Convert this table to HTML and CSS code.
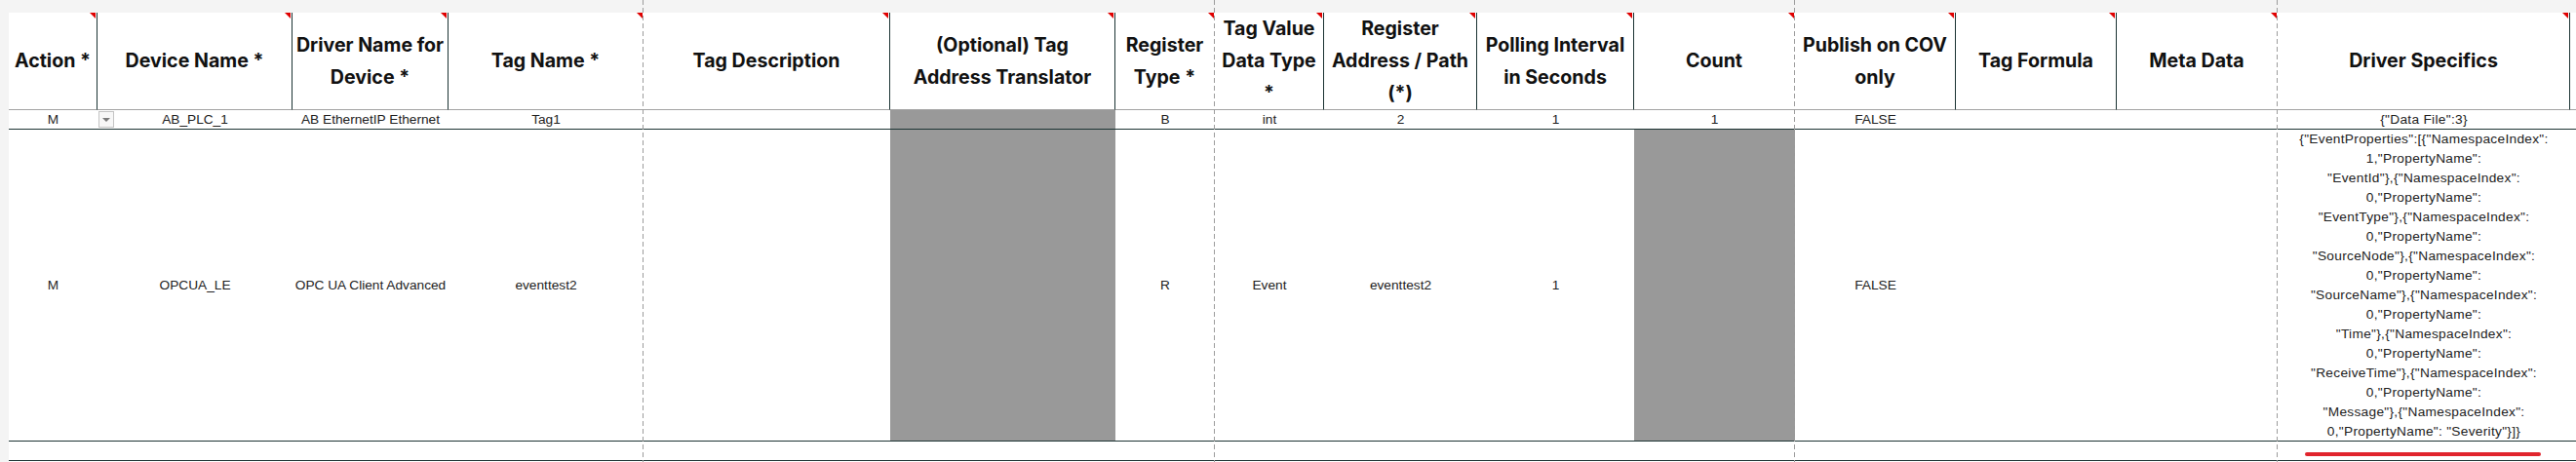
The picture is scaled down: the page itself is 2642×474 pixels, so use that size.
FILE: index.html
```html
<!DOCTYPE html>
<html lang="en">
<head>
<meta charset="utf-8">
<title>Tag Import Sheet</title>
<link rel="stylesheet" href="styles.css">
</head>
<body>
<div class="sheet">
  <div class="grid">
    <div class="hd">Action *</div>
    <div class="hd">Device Name *</div>
    <div class="hd">Driver Name for<br>Device *</div>
    <div class="hd nb">Tag Name *</div>
    <div class="hd">Tag Description</div>
    <div class="hd">(Optional) Tag<br>Address Translator</div>
    <div class="hd nb">Register<br>Type *</div>
    <div class="hd">Tag Value<br>Data Type<br>*</div>
    <div class="hd">Register<br>Address / Path<br>(*)</div>
    <div class="hd">Polling Interval<br>in Seconds</div>
    <div class="hd nb">Count</div>
    <div class="hd">Publish on COV<br>only</div>
    <div class="hd">Tag Formula</div>
    <div class="hd nb">Meta Data</div>
    <div class="hd">Driver Specifics</div>
    <div class="hd blank"></div>

    <div class="cell">M</div>
    <div class="cell">AB_PLC_1</div>
    <div class="cell">AB EthernetIP Ethernet</div>
    <div class="cell">Tag1</div>
    <div class="cell"></div>
    <div class="cell shade"></div>
    <div class="cell">B</div>
    <div class="cell">int</div>
    <div class="cell">2</div>
    <div class="cell">1</div>
    <div class="cell">1</div>
    <div class="cell">FALSE</div>
    <div class="cell"></div>
    <div class="cell"></div>
    <div class="cell json">{"Data File":3}</div>
    <div class="cell"></div>

    <div class="cell">M</div>
    <div class="cell">OPCUA_LE</div>
    <div class="cell">OPC UA Client Advanced</div>
    <div class="cell">eventtest2</div>
    <div class="cell"></div>
    <div class="cell shade"></div>
    <div class="cell">R</div>
    <div class="cell">Event</div>
    <div class="cell">eventtest2</div>
    <div class="cell">1</div>
    <div class="cell shade"></div>
    <div class="cell">FALSE</div>
    <div class="cell"></div>
    <div class="cell"></div>
    <div class="cell json">{"EventProperties":[{"NamespaceIndex":<br>1,"PropertyName":<br>"EventId"},{"NamespaceIndex":<br>0,"PropertyName":<br>"EventType"},{"NamespaceIndex":<br>0,"PropertyName":<br>"SourceNode"},{"NamespaceIndex":<br>0,"PropertyName":<br>"SourceName"},{"NamespaceIndex":<br>0,"PropertyName":<br>"Time"},{"NamespaceIndex":<br>0,"PropertyName":<br>"ReceiveTime"},{"NamespaceIndex":<br>0,"PropertyName":<br>"Message"},{"NamespaceIndex":<br>0,"PropertyName": "Severity"}]}</div>
    <div class="cell"></div>

    <div class="cell"></div><div class="cell"></div><div class="cell"></div><div class="cell"></div>
    <div class="cell"></div><div class="cell"></div><div class="cell"></div><div class="cell"></div>
    <div class="cell"></div><div class="cell"></div><div class="cell"></div><div class="cell"></div>
    <div class="cell"></div><div class="cell"></div><div class="cell"></div><div class="cell"></div>
  </div>

  <div class="pagebreak pb1"></div>
  <div class="pagebreak pb2"></div>
  <div class="pagebreak pb3"></div>
  <div class="pagebreak pb4"></div>

  <div class="dropdown"><span class="caret"></span></div>
  <div class="annotation"></div>
</div>
</body>
</html>
```
FILE: styles.css
```css
* { box-sizing: border-box; }

html, body {
  margin: 0;
  padding: 0;
  background: #f4f4f4;
}

.sheet {
  position: relative;
  width: 2642px;
  height: 474px;
  overflow: hidden;
  padding: 13px 0 0 9px;
}

.grid {
  display: grid;
  grid-template-columns: 91px 200px 160px 200px 253px 231px 102px 112px 157px 161px 165px 165px 165px 165px 300px 1fr;
  grid-template-rows: 100px 20px 320px 20px;
  background: #ffffff;
  height: 461px;
}

.hd {
  position: relative;
  display: flex;
  align-items: center;
  justify-content: center;
  text-align: center;
  font-family: "Inter", "DejaVu Sans", sans-serif;
  font-weight: 700;
  font-size: 19.6px;
  line-height: 32.7px;
  color: #111111;
  border-right: 1px solid #1b3333;
  border-bottom: 1px solid #a3a3a3;
  white-space: nowrap;
}

.hd::after {
  content: "";
  position: absolute;
  top: 0;
  right: 1px;
  width: 0;
  height: 0;
  border-top: 6px solid #e00000;
  border-left: 6px solid transparent;
}

.hd.nb { border-right-color: transparent; }
.hd.nb::after { right: 0; }

.hd.blank { border-right: none; }
.hd.blank::after { display: none; }

.cell {
  display: flex;
  align-items: center;
  justify-content: center;
  text-align: center;
  font-family: "Liberation Sans", Arial, sans-serif;
  font-size: 13.7px;
  line-height: 20px;
  color: #222222;
  border-bottom: 1px solid #1d3434;
  white-space: nowrap;
  overflow: visible;
}

.cell.shade { background: #999999; }

.cell.json {
  line-height: 20px;
  letter-spacing: 0.3px;
}

.pagebreak {
  position: absolute;
  top: 0;
  width: 1px;
  height: 474px;
  background: repeating-linear-gradient(to bottom, #9c9c9c 0 5px, transparent 5px 8px);
}
.pb1 { left: 659px; }
.pb2 { left: 1245px; }
.pb3 { left: 1840px; }
.pb4 { left: 2335px; }

.dropdown {
  position: absolute;
  left: 101px;
  top: 114px;
  width: 16px;
  height: 17px;
  border: 1px solid #c4c4c4;
  background: #f7f7f7;
  display: flex;
  align-items: center;
  justify-content: center;
}

.caret {
  width: 0;
  height: 0;
  border-left: 4px solid transparent;
  border-right: 4px solid transparent;
  border-top: 4px solid #7a7a7a;
}

.annotation {
  position: absolute;
  left: 2364px;
  top: 464px;
  width: 242px;
  height: 3.5px;
  border-radius: 2px;
  background: #e1252d;
}
```
